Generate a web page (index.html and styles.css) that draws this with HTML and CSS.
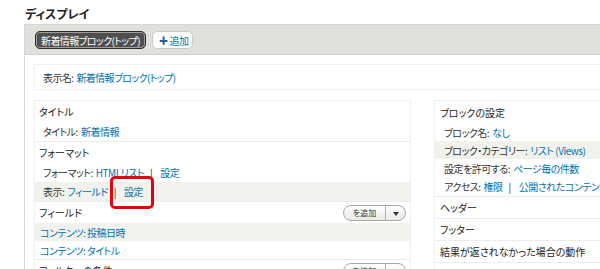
FILE: index.html
```html
<!DOCTYPE html>
<html lang="ja">
<head>
  <meta charset="UTF-8">
  <title>ディスプレイ</title>
  <link rel="stylesheet" href="styles.css">
</head>
<body>
  <h2 class="pagina-titulo">ディスプレイ</h2>
  <div class="display">
    <div class="tabs">
      <span class="tab tab-activa">新着情報ブロック(トップ)</span>
      <span class="tab tab-agregar"><span class="mas">✚</span>追加</span>
    </div>
    <div class="display-cuerpo">
      <div class="display-nombre">表示名: <a href="#">新着情報ブロック(トップ)</a></div>
      <div class="columnas">
        <div class="columna columna-main">
          <div class="bloque">
            <div class="bloque-titulo">タイトル</div>
            <div class="fila">タイトル: <a href="#">新着情報</a></div>
          </div>
          <div class="bloque">
            <div class="bloque-titulo">フォーマット</div>
            <div class="fila">フォーマット: <a href="#">HTMLリスト</a><span class="sep">|</span><a href="#">設定</a></div>
            <div class="fila fila-gris">表示: <a href="#">フィールド</a><span class="sep">|</span><a href="#">設定</a></div>
          </div>
          <div class="bloque">
            <div class="bloque-titulo">フィールド
              <span class="boton-split"><span class="boton-texto">を追加</span><span class="boton-flecha"></span></span>
            </div>
            <div class="fila fila-link fila-gris"><a href="#">コンテンツ: 投稿日時</a></div>
            <div class="fila fila-link"><a href="#">コンテンツ: タイトル</a></div>
          </div>
          <div class="bloque">
            <div class="bloque-titulo">フィルターの条件
              <span class="boton-split"><span class="boton-texto">を追加</span><span class="boton-flecha"></span></span>
            </div>
          </div>
        </div>
        <div class="columna columna-lado">
          <div class="bloque bloque-config">
            <div class="bloque-titulo">ブロックの設定</div>
            <div class="fila">ブロック名: <a href="#">なし</a></div>
            <div class="fila fila-gris">ブロック・カテゴリー: <a href="#">リスト (Views)</a></div>
            <div class="fila">設定を許可する: <a href="#">ページ毎の件数</a></div>
            <div class="fila">アクセス: <a href="#">権限</a><span class="sep">|</span><a href="#">公開されたコンテンツを閲覧</a></div>
          </div>
          <div class="bloque">
            <div class="bloque-titulo">ヘッダー</div>
          </div>
          <div class="bloque">
            <div class="bloque-titulo">フッター</div>
          </div>
          <div class="bloque">
            <div class="bloque-titulo">結果が返されなかった場合の動作</div>
          </div>
          <div class="bloque">
            <div class="bloque-titulo">ページャー</div>
          </div>
        </div>
      </div>
    </div>
  </div>
  <div class="marca"></div>
</body>
</html>
```

FILE: styles.css
```css
* {
  margin: 0;
  padding: 0;
  box-sizing: border-box;
}
body {
  width: 600px;
  height: 269px;
  overflow: hidden;
  background: #fff;
  color: #333;
  font-family: 'Noto Sans CJK JP', 'Liberation Sans', sans-serif;
  font-size: 10px;
  font-feature-settings: "palt";
  position: relative;
}
a {
  color: #0071b3;
  text-decoration: none;
}
.pagina-titulo {
  height: 24px;
  padding: 6px 0 0 25px;
  font-size: 12px;
  line-height: 16px;
  font-weight: bold;
  color: #222;
}
.display {
  margin-left: 24px;
  width: 640px;
  border: 1px solid #d6d6d2;
  border-right: none;
  border-bottom: none;
  height: 260px;
}
.tabs {
  height: 30px;
  background: #e0e0dc;
  border-bottom: 1px solid #cfcfcb;
  padding: 6px 0 0 10px;
  display: flex;
  gap: 6px;
}
.tab {
  height: 18px;
  display: flex;
  align-items: center;
  border-radius: 5px;
  padding: 0 5px;
  font-size: 10px;
  white-space: nowrap;
  letter-spacing: -0.6px;
}
.tab-activa {
  background: #4f4f4f;
  color: #fff;
  border: 1px solid #2a2a2a;
  box-shadow: inset 0 0 0 1px rgba(255,255,255,0.45);
}
.tab-agregar {
  background: #fff;
  border: 1px solid #c9c9c5;
  color: #0071b3;
  padding: 0 4px 0 6px;
}
.mas {
  font-size: 9px;
  margin-right: 2px;
  color: #1c5fa8;
}
.display-cuerpo {
  padding: 9px 0 0 9px;
}
.display-nombre {
  height: 26px;
  border: 1px solid #efefef;
  border-right: none;
  display: flex;
  align-items: center;
  padding-left: 8px;
  gap: 3px;
  letter-spacing: -0.6px;
}
.columnas {
  margin-top: 10px;
  display: grid;
  grid-template-columns: 377px 1fr;
  gap: 23px;
}
.columna {
  border: 1px solid #efefef;
  border-bottom: none;
}
.columna-lado {
  border-right: none;
}
.bloque {
  border-bottom: 1px solid #ececec;
}
.bloque-titulo {
  height: 21px;
  display: flex;
  align-items: center;
  justify-content: space-between;
  padding: 0 4px 0 4px;
  color: #222;
}
.columna-lado .bloque-titulo {
  padding-left: 5px;
}
.bloque-config .bloque-titulo {
  height: 22px;
}
.bloque-config {
  padding-bottom: 1px;
}
.fila {
  height: 19px;
  display: flex;
  align-items: center;
  padding-left: 8px;
  gap: 3px;
  white-space: nowrap;
  letter-spacing: -0.5px;
}
.columna-lado .fila {
  height: 18px;
  padding-left: 9px;
}
.fila-link {
  height: 18px;
  padding-left: 5px;
}
.fila-gris {
  background: #f2f2ec;
}
.sep {
  color: #222;
  margin: 0 5px 0 3px;
}
.boton-split {
  display: flex;
  height: 16px;
  width: 63px;
  border: 1px solid #a8a8a8;
  border-radius: 9px;
  background: linear-gradient(to bottom, #ffffff 0%, #e9e9e6 100%);
  overflow: hidden;
}
.boton-texto {
  width: 42px;
  font-size: 8px;
  display: flex;
  align-items: center;
  justify-content: center;
  color: #333;
  border-right: 1px solid #b0b0b0;
}
.boton-flecha {
  flex: 1;
  position: relative;
}
.boton-flecha::after {
  content: '';
  position: absolute;
  left: 7px;
  top: 6px;
  border-left: 3px solid transparent;
  border-right: 3px solid transparent;
  border-top: 4px solid #333;
}
.marca {
  position: absolute;
  left: 110px;
  top: 176px;
  width: 44px;
  height: 33px;
  border: 3px solid #e60012;
  border-radius: 5px;
}
```
